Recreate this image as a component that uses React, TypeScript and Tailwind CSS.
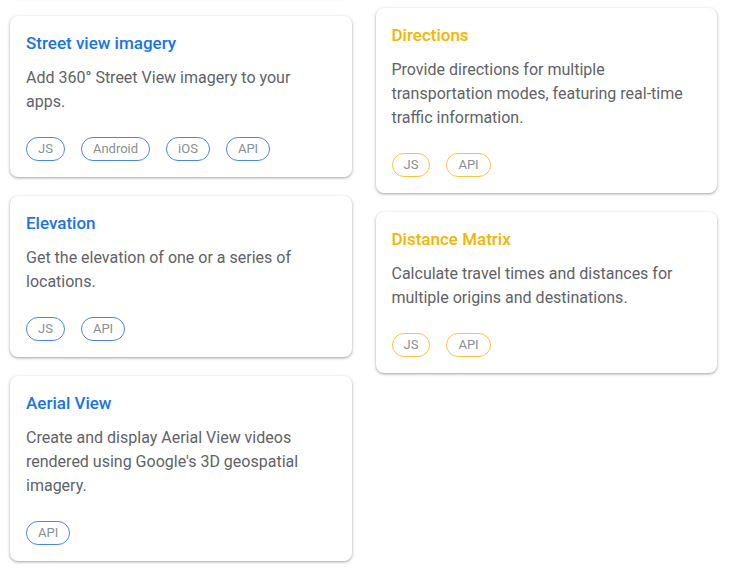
type Card = {
  title: string
  desc: string
  tags: string[]
}

const left: Card[] = [
  {
    title: "Street view imagery",
    desc: "Add 360° Street View imagery to your apps.",
    tags: ["JS", "Android", "iOS", "API"],
  },
  {
    title: "Elevation",
    desc: "Get the elevation of one or a series of locations.",
    tags: ["JS", "API"],
  },
  {
    title: "Aerial View",
    desc: "Create and display Aerial View videos rendered using Google's 3D geospatial imagery.",
    tags: ["API"],
  },
]

const right: Card[] = [
  {
    title: "Directions",
    desc: "Provide directions for multiple transportation modes, featuring real-time traffic information.",
    tags: ["JS", "API"],
  },
  {
    title: "Distance Matrix",
    desc: "Calculate travel times and distances for multiple origins and destinations.",
    tags: ["JS", "API"],
  },
]

function ApiCard({ card, tone }: { card: Card; tone: "blue" | "yellow" }) {
  const blue = tone === "blue"
  return (
    <div className="rounded-lg bg-white px-4 pt-[15px] pb-4 shadow-[0_1px_2px_rgba(60,64,67,0.3),0_1px_3px_1px_rgba(60,64,67,0.15)]">
      <h3
        className={
          blue
            ? "text-[17px] leading-6 font-medium text-[#1a73e8]"
            : "text-[17px] leading-6 font-medium text-[#f4b400]"
        }
      >
        {card.title}
      </h3>
      <p className="mt-[11px] pr-4 text-[16px] leading-6 text-[#5f6368]">{card.desc}</p>
      <div className="mt-[23px] flex gap-4">
        {card.tags.map((t) => (
          <span
            key={t}
            className={
              blue
                ? "flex h-6 items-center rounded-full border border-[#4a86e8] px-[11px] text-[13px] text-[#8a8f94]"
                : "flex h-6 items-center rounded-full border border-[#f6c344] px-[11px] text-[13px] text-[#8a8f94]"
            }
          >
            {t}
          </span>
        ))}
      </div>
    </div>
  )
}

export default function App() {
  return (
    <div
      className="grid h-[573px] grid-cols-2 items-start gap-6 overflow-hidden bg-white pl-[10px] pr-[12px]"
      style={{ fontFamily: "Roboto, 'Liberation Sans', sans-serif" }}
    >
      {/* left column */}
      <div className="-mt-[40px] flex flex-col gap-[19px]">
        <div className="h-[37px] rounded-lg bg-white shadow-[0_1px_2px_rgba(60,64,67,0.3),0_1px_3px_1px_rgba(60,64,67,0.15)]" />
        {left.map((c) => (
          <ApiCard key={c.title} card={c} tone="blue" />
        ))}
      </div>

      {/* right column */}
      <div className="mt-2 flex flex-col gap-[19px]">
        {right.map((c) => (
          <ApiCard key={c.title} card={c} tone="yellow" />
        ))}
      </div>
    </div>
  )
}
